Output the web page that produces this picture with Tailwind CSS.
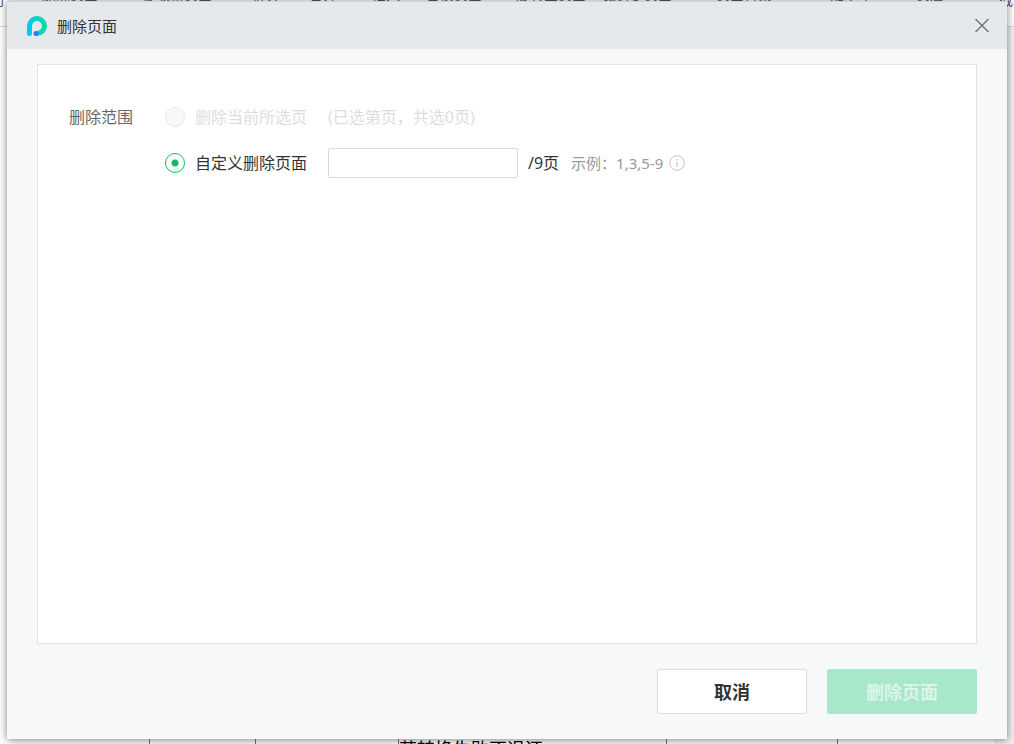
<!DOCTYPE html>
<html lang="zh-CN">
<head>
<meta charset="utf-8">
<meta name="viewport" content="width=device-width, initial-scale=1">
<title>删除页面</title>
<script src="https://cdn.jsdelivr.net/npm/@tailwindcss/browser@4"></script>
</head>
<body class="relative h-screen overflow-hidden bg-white font-['Noto_Sans','Noto_Sans_CJK_SC',sans-serif] text-[#333]">

<!-- Document window behind the dialog -->
<div class="absolute inset-0 flex flex-col overflow-hidden" aria-hidden="true">
  <div class="relative h-[27px] shrink-0 border-b border-[#dcdcdc] bg-white text-sm text-[#555]">
    <div class="absolute -top-[15px] left-[42px] flex whitespace-nowrap leading-5">
      <span class="w-[100px]">删除页面</span><span class="w-[110px]">提取新页面</span><span class="w-[57px]">拆分</span><span class="w-[63px]">合并</span><span class="w-[54px]">插入</span><span class="w-[90px]">替换页面</span><span class="w-[86px]">旋转全页面</span><span class="w-[114px]">裁剪多页面</span><span class="w-[114px]">页面背景</span><span class="w-[86px]">加水印</span><span>页眉</span>
    </div>
    <span class="absolute -top-[10px] -left-[10px] leading-5">门</span>
    <span class="absolute -top-[10px] left-[999px] leading-5 whitespace-nowrap">截图</span>
  </div>
  <div class="flex flex-1 bg-[#f0f1f3]">
    <div class="mr-5 flex flex-1 items-end bg-white">
      <div class="flex h-6 w-full pl-[149px]">
        <div class="w-[106px] border-l border-[#777]"></div>
        <div class="w-[143px] border-l border-[#777]"></div>
        <div class="w-[268px] border-l border-[#777] pt-[17px] text-lg leading-6 whitespace-nowrap text-black">若转换失败不退还</div>
        <div class="w-[171px] border-l border-[#777]"></div>
        <div class="flex-1 border-l border-[#777]"></div>
      </div>
    </div>
  </div>
</div>

<!-- Dialog -->
<form role="dialog" aria-labelledby="title" class="absolute inset-x-[7px] top-px bottom-[5px] flex flex-col bg-[#f6f8fa] shadow-[0_1px_8px_rgba(0,0,0,0.5)]">
  <header class="flex h-12 shrink-0 items-center border-t border-[#d0d3d5] bg-[#e5e9ec] pr-[17px] pl-5">
    <svg class="size-5" viewBox="0 0 20 20" fill="none" aria-hidden="true">
      <defs>
        <linearGradient id="brand" x1="0" y1="12" x2="20" y2="10" gradientUnits="userSpaceOnUse">
          <stop stop-color="#00c5fa"/><stop offset="1" stop-color="#0bdc9e"/>
        </linearGradient>
      </defs>
      <path d="M2.5 17.5V10a7.5 7.5 0 1 1 7.5 7.5" stroke="url(#brand)" stroke-width="5" stroke-linecap="round"/>
      <circle cx="9" cy="17.5" r="2.5" fill="#3f72ff"/>
    </svg>
    <h1 id="title" class="ml-[10px] text-[15px] leading-6">删除页面</h1>
    <button type="button" aria-label="关闭" class="ml-auto flex size-4 items-center justify-center">
      <svg class="size-4" viewBox="0 0 16 16" fill="none" stroke="#707376" stroke-width="1.4" aria-hidden="true"><path d="M1.5 1l13 13M14.5 1l-13 13"/></svg>
    </button>
  </header>

  <div class="mx-[30px] mt-[15px] flex flex-1 items-start border border-[#e2e3e4] bg-white pt-[37px] pl-[31px] text-base leading-[30px]">
    <div id="range" class="w-24 shrink-0 text-[#666]">删除范围</div>
    <div role="radiogroup" aria-labelledby="range" class="flex flex-col gap-4">
      <div class="flex items-center text-[#ddd]">
        <input type="radio" id="current" name="range" disabled class="size-5 shrink-0 appearance-none rounded-full border border-[#e5e6e8] bg-[#f6f8fa]">
        <label for="current" class="ml-[10px] w-[133px]">删除当前所选页</label>
        <span>(已选第页，共选0页)</span>
      </div>
      <div class="flex items-center">
        <input type="radio" id="custom" name="range" checked class="size-5 shrink-0 appearance-none rounded-full border border-[#13bb67] bg-white bg-[radial-gradient(circle,#13bb67_3px,transparent_4px)]">
        <label for="custom" class="ml-[10px] w-[133px]">自定义删除页面</label>
        <input type="text" aria-label="页码范围" class="h-[30px] w-[190px] rounded-xs border border-[#dadbdc] bg-white px-2 outline-none">
        <span class="ml-[10px]">/9页</span>
        <span class="ml-3 text-[15px] text-[#999]">示例：1,3,5-9</span>
        <svg class="ml-[6px] size-4" viewBox="0 0 16 16" fill="none" stroke="#c4c4c4" aria-hidden="true"><circle cx="8" cy="8" r="7.3"/><path d="M8 4v1.5M8 7v5" stroke-width="1.2"/></svg>
      </div>
    </div>
  </div>

  <footer class="flex shrink-0 justify-end gap-5 px-[30px] pt-[25px] pb-[25px] text-lg font-bold">
    <button type="button" class="h-[45px] w-[150px] rounded-xs border border-[#dadbdc] bg-white">取消</button>
    <button type="submit" disabled class="h-[45px] w-[150px] rounded-xs bg-[#a9e7ca] text-[#dcf5e9]">删除页面</button>
  </footer>
</form>
</body>
</html>
